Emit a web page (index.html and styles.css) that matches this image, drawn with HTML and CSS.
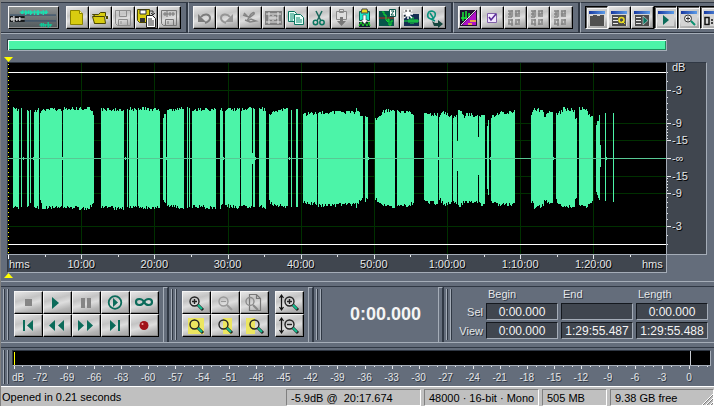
FILE: index.html
```
<!DOCTYPE html>
<html lang="en">

<head>
    <meta charset="UTF-8">
    <meta name="viewport" content="width=device-width, initial-scale=1.0">
    <title>Wave Editor</title>
    <link rel="stylesheet" href="styles.css">
</head>

<body>
    <!-- Shared shapes -->
    <svg class="defs" aria-hidden="true">
        <linearGradient id="titleBar">
            <stop offset="0" stop-color="#1838a0" />
            <stop offset="1" stop-color="#5c9ce8" />
        </linearGradient>
        <symbol id="lens" viewBox="0 0 28 22">
            <circle cx="12.5" cy="9.5" r="4.5" fill="none" stroke="currentColor" stroke-width="1.4" />
            <path d="M16 13l5 5" stroke="#222" stroke-width="3" />
            <path d="M16 13l4 4" stroke="#10c090" stroke-width="2" />
        </symbol>
        <symbol id="faders" viewBox="0 0 22 22">
            <path d="M4 4h5M4 7h3M8 3v7M4 10h4M11 4h5M15 3v4M11 7h5M11 9h5M4 13h5M4 17h5M8 12v7M11 13h5M15 12v4M11 17h5M5 14v3M6 4v5M12 4v5M12 14v4" fill="none" stroke="#858585" stroke-width="1.5" />
        </symbol>
        <symbol id="window" viewBox="0 0 22 22">
            <path d="M3 4h16v15H3z" fill="#d4d4d4" />
            <path d="M3 4h16v3H3z" fill="url(#titleBar)" />
        </symbol>
    </svg>

    <div class="app">
        <header class="toolbar">
            <div class="tool-group">
                <button class="logo-btn" aria-label="Switch view">
                    <svg viewBox="0 0 50 20">
                        <path d="M1 7h47M1 13h47" stroke="#2b4a68" />
                        <path d="M11 4h29M13 3v3M14 2v4M17 2v5M18 3v3M20 2v4M22 2v5M23 3v3M26 2v5M29 2v5M30 2v5M33 3v3M35 2v5M37 3v3M38 2v4" stroke="#19e0b0" stroke-width="1.5" />
                        <path d="M1 8h15v6H1z" fill="#16181a" />
                        <path d="M1 11h15M3 9v4M5 8v6M8 10v3M11 9v4" stroke="#eee" stroke-width="1.2" />
                        <path d="M31 17h13M33 15v4M35 15v4M37 16v3M40 14v6M42 16v3" stroke="#10c898" stroke-width="1.5" />
                    </svg>
                </button>
                <button class="tool-btn" aria-label="New">
                    <svg viewBox="0 0 22 22"><path d="M4.500 3.500h9l3 3v11h-12z" fill="#d8cc10" stroke="#8a8200" /><path d="M13.500 3.500v3h3" fill="#fff890" stroke="#8a8200" /></svg>
                </button>
                <button class="tool-btn" aria-label="Open">
                    <svg viewBox="0 0 22 22"><path d="M5.500 16.500v-8l-2-1h6l2-2h5v4" fill="#d8cc10" stroke="#4b4600" /><path d="M5.500 16.500l-2-7h12l1 7z" fill="#d8cc10" stroke="#4b4600" /><path d="M17 9h2v3h-2z" fill="#4b4600" /></svg>
                </button>
                <button class="tool-btn" aria-label="Save" disabled>
                    <svg viewBox="0 0 22 22"><path d="M3.500 3.500h15v15h-13l-2-2zM7.500 3.500v6h7v-6M6.500 18.500v-6h9v6M9 14v3" fill="none" stroke="#8d8d8d" /></svg>
                </button>
                <button class="tool-btn" aria-label="Save as">
                    <svg viewBox="0 0 22 22"><path d="M2.500 2.500h12v13h-10l-2-2z" fill="#d8cc10" stroke="#4b4600" /><path d="M5 3h6v4H5z" fill="#fff" stroke="#333" /><path d="M5 11h5v4H5z" fill="#333" /><path d="M11.500 8.500h6l3 3v9h-9z" fill="#fff" stroke="#222" /><path d="M13 12h4M13 14h6M13 16h6M13 18h6M15 4h3v3M16 6l2 2 2-2" fill="none" stroke="#333" /></svg>
                </button>
                <button class="tool-btn" aria-label="Save selection" disabled>
                    <svg viewBox="0 0 22 22"><path d="M3.500 3.500h15v15h-13l-2-2zM7.500 18.500v-6h8v6M10 14v3M5 7h12M7 5v4M9 4v6M12 5v4M15 5v4" fill="none" stroke="#777" /></svg>
                </button>
            </div>

            <div class="tool-group">
                <button class="tool-btn" aria-label="Undo" disabled>
                    <svg viewBox="0 0 22 22"><path d="M8 10c3-4 9-3 9 1 0 3-2 4-5 5" fill="none" stroke="#7c7c7c" stroke-width="2" /><path d="M5 7v8h8z" fill="#7c7c7c" /></svg>
                </button>
                <button class="tool-btn" aria-label="Redo" disabled>
                    <svg viewBox="0 0 22 22"><path d="M14 10c-3-4-9-3-9 1 0 3 2 4 5 5" fill="none" stroke="#959595" stroke-width="2" /><path d="M17 7v8H9z" fill="#959595" /></svg>
                </button>
                <button class="tool-btn" aria-label="Repeat last command" disabled>
                    <svg viewBox="0 0 22 22"><path d="M4 8l6 2c2-4 6-6 5-3l-5 4c-3 3-1 3 2 1l5 2-6 1-5-2M5 6l4 4" fill="none" stroke="#848484" stroke-width="1.500" /></svg>
                </button>
                <button class="tool-btn" aria-label="Trim" disabled>
                    <svg viewBox="0 0 22 22"><path d="M3 4h17v14H3z" fill="#808080" /><path d="M4 7h15M4 15h15M7 5v12M16 5v12M9 9v4M11 8v6M13 9v4M7 11h9" stroke="#e4e4e4" /></svg>
                </button>
                <button class="tool-btn" aria-label="Copy">
                    <svg viewBox="0 0 22 22"><path d="M3.500 4.500h6l2 2v8h-8z" fill="#e8fff8" stroke="#08755f" /><path d="M9.500 7.500h6l3 3v7h-9z" fill="#e8fff8" stroke="#08755f" /><path d="M5 7h4M5 9h4M5 11h4M5 13h3M11 11h4M11 13h6M11 15h6" stroke="#0d8c70" /></svg>
                </button>
                <button class="tool-btn" aria-label="Cut">
                    <svg viewBox="0 0 22 22"><path d="M8 4l5 10M14 4l-5 10" fill="none" stroke="#17665a" stroke-width="1.500" /><circle cx="7.500" cy="15.500" r="2.200" fill="none" stroke="#08755f" stroke-width="1.500" /><circle cx="14" cy="15.500" r="2.200" fill="none" stroke="#08755f" stroke-width="1.500" /></svg>
                </button>
                <button class="tool-btn" aria-label="Paste" disabled>
                    <svg viewBox="0 0 22 22"><path d="M5.500 4.500h10v8h-10zM8.500 2.500h4v3h-4z" fill="#ddd" stroke="#888" /><path d="M9 10h3v4h3l-4.500 5L6 14h3z" fill="#777" /></svg>
                </button>
                <button class="tool-btn" aria-label="Paste to new">
                    <svg viewBox="0 0 22 22"><path d="M5.500 4.500h10v9h-10z" fill="#20e8c8" stroke="#08604f" /><path d="M8 2h5l1 4H7z" fill="#e8dc20" stroke="#444" /><path d="M5 15h11v5H5z" fill="#123" /><path d="M5 19l2-4 2 4 2-4 2 4 2-4 1 4" fill="none" stroke="#1bdc20" /><path d="M9 8h3v5h2l-3.500 4L7 13h2z" fill="#fff" stroke="#222" stroke-width=".5" /></svg>
                </button>
                <button class="tool-btn" aria-label="Mix paste">
                    <svg viewBox="0 0 22 22"><path d="M2 4h15v15H2z" fill="#07564a" /><path d="M2 11h15" stroke="#c02020" /><path d="M5 5h2v3h2v5l2 2v-3h1v6h2v-4h2" fill="none" stroke="#16e02c" /><path d="M12.500 2.500h6v7h-6z" fill="#fff" stroke="#07564a" /><path d="M14 4h3l-3 4h3" fill="none" stroke="#07564a" /></svg>
                </button>
                <button class="tool-btn" aria-label="Delete silence">
                    <svg viewBox="0 0 22 22"><path d="M4 7h15v12H4z" fill="#152f52" /><path d="M4 14h15M9 12v4M11 11v6M13 10v7M15 12v4M17 12v4" stroke="#19e840" /><path d="M8 2v10M3 7h10M4 3l8 8M12 3l-8 8" stroke="#fff" stroke-width="1.500" /><path d="M6 3v2M10 3v2M4 9h2" stroke="#222" /></svg>
                </button>
                <button class="tool-btn" aria-label="Convert sample type">
                    <svg viewBox="0 0 22 22"><path d="M8 12C3 11 4 4 9 4c5 1 4 7-1 8l4 2M7 6l4 6" fill="none" stroke="#0a927c" stroke-width="1.600" /><path d="M9 14l3 2h3v-3l5 4-5 4v-2h-4z" fill="#14463e" /></svg>
                </button>
            </div>

            <div class="tool-group">
                <button class="tool-btn" aria-label="Spectral view">
                    <svg viewBox="0 0 22 22"><path d="M2 3h17v16H2z" fill="#201030" /><path d="M4 18L18 4v14z" fill="#b010c8" /><path d="M3 11h6M5 5v9M8 4v8M11 6v5" stroke="#18e838" stroke-width="1.500" /><path d="M3 18L18 3" stroke="#ddd" /><path d="M12 14h6M10 17h4" stroke="#f4d820" stroke-width="1.500" /></svg>
                </button>
                <button class="tool-btn" aria-label="Settings">
                    <svg viewBox="0 0 22 22"><path d="M6.500 6.500h9v9h-9z" fill="#f4e8ff" stroke="#8060a8" /><path d="M8 10l2 3 5-6" fill="none" stroke="#5a2c98" stroke-width="1.600" /></svg>
                </button>
                <button class="tool-btn" aria-label="Script 1" disabled><svg><use href="#faders" /></svg></button>
                <button class="tool-btn" aria-label="Script 2" disabled><svg><use href="#faders" /></svg></button>
                <button class="tool-btn" aria-label="Script 3" disabled><svg><use href="#faders" /></svg></button>
            </div>

            <div class="tool-group">
                <button class="tool-btn pressed" aria-label="Organizer" aria-pressed="true">
                    <svg viewBox="0 0 22 22"><use href="#window" /><path d="M4 9h3v-1h4v1h3v-1h4v11H4z" fill="#505050" /></svg>
                </button>
                <button class="tool-btn" aria-label="Cue list">
                    <svg viewBox="0 0 22 22"><use href="#window" /><path d="M4 8h14v11H4z" fill="#4c4c4c" /><path d="M5 10.500h5M5 13.500h5M5 16.500h5" stroke="#e8e8e8" /><circle cx="13.500" cy="13" r="2.500" fill="none" stroke="#e8dc20" stroke-width="1.600" /><path d="M14 14l3 3" stroke="#e8dc20" /></svg>
                </button>
                <button class="tool-btn" aria-label="Play list">
                    <svg viewBox="0 0 22 22"><use href="#window" /><path d="M4 8h14v11H4z" fill="#4c4c4c" /><path d="M5 10.500h5M5 13.500h5M5 16.500h5" stroke="#e8e8e8" /><path d="M12 9l5 4.500-5 4.500z" fill="#0b7460" stroke="#ddd" stroke-width=".6" /></svg>
                </button>
                <button class="tool-btn pressed" aria-label="Transport" aria-pressed="true">
                    <svg viewBox="0 0 22 22"><use href="#window" /><path d="M8 8l6 5-6 5z" fill="#0b6b5a" /></svg>
                </button>
                <button class="tool-btn pressed" aria-label="Zoom controls" aria-pressed="true">
                    <svg viewBox="0 0 22 22"><use href="#window" /><circle cx="10" cy="11.500" r="3.500" fill="#eee" stroke="#333" /><path d="M8 11.500h4M10 9.500v4" stroke="#333" /><path d="M13 14l4 4" stroke="#089070" stroke-width="2" /></svg>
                </button>
                <button class="tool-btn pressed" aria-label="Time display" aria-pressed="true">
                    <svg viewBox="0 0 22 22"><use href="#window" /><path d="M4 10.500h4v7H4zM11 12v2M11 15v2M14 11l2-1v8" fill="none" stroke="#111" stroke-width="1.500" /></svg>
                </button>
            </div>
        </header>

        <main class="editor">
            <div class="overview"></div>
            <div class="marker-row"><span class="marker down"></span></div>
            <div class="wave-row">
                <svg class="wave" id="wave" viewBox="0 0 658 191" preserveAspectRatio="none" role="img" aria-label="Waveform"></svg>
                <svg class="db-scale" id="dbScale"></svg>
            </div>
            <svg class="time-ruler" id="timeRuler"></svg>
            <div class="marker-row bottom"><span class="marker up"></span></div>
        </main>

        <div class="rail"></div>

        <section class="controls">
            <div class="panel">
                <span class="grip"></span>
                <div class="btn-grid transport">
                    <button class="big-btn" aria-label="Stop" disabled><svg viewBox="0 0 28 22"><path d="M11 7h7v7h-7z" fill="#858585" /></svg></button>
                    <button class="big-btn" aria-label="Play"><svg viewBox="0 0 28 22"><path d="M9 5l7 6-7 6z" fill="#0b6b5a" /></svg></button>
                    <button class="big-btn" aria-label="Pause" disabled><svg viewBox="0 0 28 22"><path d="M9 6h4v10H9zM15 6h4v10h-4z" fill="#858585" /></svg></button>
                    <button class="big-btn" aria-label="Play to end"><svg viewBox="0 0 28 22"><circle cx="14" cy="10.500" r="6.300" fill="none" stroke="#0b6b5a" stroke-width="1.800" /><path d="M12 6l5 4.500-5 4.500z" fill="#0b6b5a" /></svg></button>
                    <button class="big-btn" aria-label="Loop"><svg viewBox="0 0 28 22"><path d="M14 10c-2-4-8-4-8 0s6 4 8 0 8-4 8 0-6 4-8 0z" fill="none" stroke="#0b6b5a" stroke-width="2.200" /></svg></button>
                    <button class="big-btn" aria-label="Go to beginning"><svg viewBox="0 0 28 22"><path d="M9 5h2v11H9zM19 5v11l-6-5.500z" fill="#0b6b5a" /></svg></button>
                    <button class="big-btn" aria-label="Rewind"><svg viewBox="0 0 28 22"><path d="M12 5v11l-6-5.500zM21 5v11l-6-5.500z" fill="#0b6b5a" /></svg></button>
                    <button class="big-btn" aria-label="Fast forward"><svg viewBox="0 0 28 22"><path d="M6 5v11l6-5.500zM15 5v11l6-5.500z" fill="#0b6b5a" /></svg></button>
                    <button class="big-btn" aria-label="Go to end"><svg viewBox="0 0 28 22"><path d="M17 5h2v11h-2zM9 5v11l6-5.500z" fill="#0b6b5a" /></svg></button>
                    <button class="big-btn" aria-label="Record"><svg viewBox="0 0 28 22"><circle cx="14" cy="10.500" r="4.500" fill="#a01218" /><circle cx="12.500" cy="9" r="1" fill="#f0a0a0" /></svg></button>
                </div>
                <span class="edge"></span>
            </div>

            <div class="panel">
                <span class="grip"></span>
                <div class="btn-grid zoom">
                    <button class="big-btn" aria-label="Zoom in"><svg viewBox="0 0 28 22"><use href="#lens" /><path d="M10 9.500h5M12.500 7v5" stroke="#222" stroke-width="1.400" /></svg></button>
                    <button class="big-btn" aria-label="Zoom out" disabled><svg viewBox="0 0 28 22"><circle cx="12.500" cy="9.500" r="4.500" fill="none" stroke="#999" stroke-width="1.400" /><path d="M16 13l5 5" stroke="#999" stroke-width="2" /><path d="M10 9.500h5" stroke="#999" /></svg></button>
                    <button class="big-btn" aria-label="Zoom full" disabled><svg viewBox="0 0 28 22"><path d="M9.500 2.500h7l4 4v12h-11zM16.500 2.500v4h4" fill="none" stroke="#777" stroke-width="1.200" /><circle cx="10" cy="9.500" r="4" fill="none" stroke="#8c8c8c" stroke-width="1.400" /><path d="M13 13l5 5" stroke="#888" stroke-width="2" /></svg></button>
                    <button class="big-btn" aria-label="Zoom to selection"><svg viewBox="0 0 28 22"><path d="M6 3h16v16H6z" fill="#ece660" /><use href="#lens" /></svg></button>
                    <button class="big-btn" aria-label="Zoom to left edge"><svg viewBox="0 0 28 22"><path d="M12 3h9v16h-9z" fill="#ece660" /><use href="#lens" /></svg></button>
                    <button class="big-btn" aria-label="Zoom to right edge"><svg viewBox="0 0 28 22"><path d="M6 3h9v16H6z" fill="#ece660" /><use href="#lens" x="2" /></svg></button>
                </div>
                <div class="btn-grid zoom-vertical">
                    <button class="big-btn" aria-label="Zoom in vertically"><svg viewBox="0 0 28 22"><path d="M6.500 4v13M4.500 6l2-3 2 3M4.500 15l2 3 2-3" fill="none" stroke="#111" stroke-width="1.200" /><use href="#lens" x="2" /><path d="M12 9.500h5M14.500 7v5" stroke="#222" stroke-width="1.400" /></svg></button>
                    <button class="big-btn" aria-label="Zoom out vertically"><svg viewBox="0 0 28 22"><path d="M6.500 4v13M4.500 6l2-3 2 3M4.500 15l2 3 2-3" fill="none" stroke="#111" stroke-width="1.200" /><use href="#lens" x="2" /><path d="M12 9.500h5" stroke="#222" stroke-width="1.400" /></svg></button>
                </div>
                <span class="edge"></span>
            </div>

            <div class="panel time-panel">
                <span class="grip"></span>
                <output class="time">0:00.000</output>
                <span class="edge"></span>
            </div>

            <div class="panel range-panel">
                <span class="grip"></span>
                <div class="range-grid">
                    <span></span>
                    <span class="col-name">Begin</span>
                    <span class="col-name">End</span>
                    <span class="col-name">Length</span>
                    <label for="selBegin">Sel</label>
                    <input type="text" id="selBegin" value="0:00.000">
                    <input type="text" aria-label="Sel end" value="">
                    <input type="text" aria-label="Sel length" value="0:00.000">
                    <label for="viewBegin">View</label>
                    <input type="text" id="viewBegin" value="0:00.000">
                    <input type="text" aria-label="View end" value="1:29:55.487">
                    <input type="text" aria-label="View length" value="1:29:55.488">
                </div>
            </div>
        </section>

        <div class="rail"></div>

        <section class="meter">
            <span class="grip"></span>
            <div class="meter-body">
                <svg class="meter-bar" aria-label="Level meter">
                    <path d="M1 1h1v13H1z" fill="#ffff00" />
                    <rect x="97.200%" y="0" width="1" height="14" fill="#c8ccd2" />
                </svg>
                <svg class="meter-scale" id="meterScale"></svg>
            </div>
        </section>

        <footer class="status">
            <span class="status-msg">Opened in 0.21 seconds</span>
            <span class="cell level">-5.9dB @&nbsp; 20:17.674</span>
            <span class="cell format">48000 · 16-bit · Mono</span>
            <span class="cell size">505 MB</span>
            <span class="cell free">9.38 GB free
                <svg class="sizer" viewBox="0 0 12 12"><path d="M1 12L12 1M5 12l7-7M9 12l3-3" stroke="#fff" /><path d="M2 12L12 2M6 12l6-6M10 12l2-2" stroke="#808080" /></svg>
            </span>
        </footer>
    </div>

    <script src="script.js"></script>
</body>

</html>
```
FILE: styles.css
```
/* Global Style */
* {
    margin: 0;
    padding: 0;
    box-sizing: border-box;
}

:root {
    --slate: #646d7b;
    --light: #a5adb8;
    --dark: #303844;
    --ruler: #40464f;
    --wave: #4cf4a8;
}

body {
    font-family: "Liberation Sans", Arial, sans-serif;
    font-size: 11px;
    background: var(--slate);
    color: #e4e6e8;
}

svg {
    display: block;
}

.defs {
    width: 0;
    height: 0;
}

.app {
    display: flex;
    flex-direction: column;
    height: 100vh;
    min-height: 360px;
    overflow: hidden;
    border-left: 1px solid #808080;
}

/* Toolbar */
.toolbar {
    display: flex;
    flex: none;
    border-top: 2px solid #7c8084;
    border-bottom: 1px solid var(--light);
    overflow: hidden;
}

.tool-group {
    display: flex;
    flex: none;
    padding: 3px 5px;
    border: 1px solid var(--dark);
    border-right-width: 2px;
}

.tool-group + .tool-group {
    border-left-color: var(--light);
    padding-left: 4px;
}

.tool-group:first-child {
    border-left: none;
    padding-left: 7px;
}

.tool-group:last-child {
    flex: 1 0 auto;
}

.tool-btn,
.big-btn,
.logo-btn {
    flex: none;
    border: 1px solid #f4f4f4;
    border-right-color: #000;
    border-bottom-color: #000;
    background: linear-gradient(165deg, #e6e6e6, #c4c4c4 35%, #dedede 55%, #b4b4b4 80%, #a2a2a2);
    box-shadow: inset -1px -1px #8c8c8c;
}

.tool-btn {
    width: 23px;
    height: 23px;
}

.tool-btn svg {
    width: 22px;
    height: 22px;
    margin: -1px;
}

.tool-btn.pressed {
    border-color: #000 #f4f4f4 #f4f4f4 #000;
    box-shadow: inset 1px 1px #606060, inset 2px 2px #f4f4f4;
}

.tool-btn.pressed svg {
    margin: 0;
}

.logo-btn {
    width: 51px;
    height: 23px;
    margin-right: 7px;
    background: linear-gradient(#8d9090, #50585c);
}

.logo-btn svg {
    width: 49px;
    height: 20px;
}

/* Waveform area */
.editor {
    display: flex;
    flex-direction: column;
    flex: 1;
    min-height: 0;
    padding: 5px 7px 0 6px;
}

.overview {
    flex: none;
    height: 12px;
    margin-right: 40px;
    border: 1px solid var(--dark);
    border-right-color: var(--light);
    border-bottom-color: var(--light);
    background: var(--wave);
    box-shadow: inset 1px 1px #e8fff4, inset -1px -1px #209060;
}

.marker-row {
    display: flex;
    flex: none;
    align-items: flex-end;
    height: 11px;
}

.marker-row.bottom {
    align-items: flex-start;
    height: 8px;
}

.marker {
    width: 9px;
    height: 5px;
    margin-left: -3px;
    background: #ffff00;
}

.marker.down {
    clip-path: polygon(0 0, 100% 0, 50% 100%);
}

.marker.up {
    clip-path: polygon(50% 0, 100% 100%, 0 100%);
}

.wave-row {
    display: flex;
    flex: 1;
    min-height: 0;
}

.wave {
    flex: 1;
    min-width: 0;
    height: 100%;
    background: #000;
    border: 1px solid var(--dark);
    border-right-color: var(--light);
    border-bottom-color: var(--light);
    shape-rendering: crispEdges;
}

.db-scale {
    flex: none;
    width: 40px;
    height: 100%;
    background: var(--ruler);
    border: 1px solid var(--light);
    border-top-color: var(--dark);
    border-left: none;
}

.time-ruler {
    flex: none;
    width: calc(100% - 40px);
    height: 18px;
    background: var(--ruler);
    border: 1px solid var(--light);
    border-top: none;
    border-left-color: var(--dark);
}

.scale-text {
    fill: #e4e6e8;
    font-size: 11px;
    text-shadow: 1px 1px #000;
}

.scale-text.small {
    font-size: 10px;
}

.tick {
    fill: #e4e6e8;
    shape-rendering: crispEdges;
}

/* Bars between the docked rows */
.rail {
    flex: none;
    height: 6px;
    border-top: 1px solid var(--light);
    border-bottom: 1px solid var(--dark);
}

/* Transport, zoom, time and range panels */
.controls {
    display: flex;
    flex: none;
    overflow: hidden;
}

.panel {
    display: flex;
    flex: none;
    padding-left: 2px;
    border-right: 1px solid var(--dark);
}

.grip {
    flex: none;
    width: 5px;
    margin: 2px 0;
    border-left: 1px solid var(--light);
    border-right: 1px solid var(--light);
    box-shadow: inset 1px 0 var(--dark), 1px 0 var(--dark);
}

.edge {
    width: 5px;
    border: 1px solid var(--light);
    border-right-color: var(--dark);
    border-bottom: none;
    margin-left: 4px;
}

.btn-grid {
    display: grid;
    grid-auto-rows: 23px;
    padding: 4px 0 5px;
    margin-left: 6px;
}

.transport {
    grid-template-columns: repeat(5, 29px);
}

.zoom {
    grid-template-columns: repeat(3, 29px);
}

.zoom-vertical {
    grid-template-columns: 29px;
}

.big-btn svg {
    width: 28px;
    height: 22px;
    margin: -1px;
    color: #222;
}

.time-panel {
    flex: 1 0 130px;
}

.time {
    flex: 1;
    align-self: center;
    padding-left: 16px;
    text-align: center;
    font-size: 18px;
    font-weight: bold;
    color: #f4f4f4;
}

.range-panel {
    border-right: none;
    padding-right: 6px;
}

.range-grid {
    display: grid;
    grid-template-columns: 31px repeat(3, 72px);
    grid-template-rows: 14px 17px 17px;
    gap: 2px 3px;
    align-items: center;
    margin-left: 1px;
    text-shadow: 1px 1px #303844;
}

.col-name {
    padding-left: 2px;
}

.range-grid label {
    text-align: right;
}

.range-grid input {
    width: 100%;
    height: 17px;
    border: 1px solid var(--light);
    border-top-color: #14181e;
    border-left-color: #14181e;
    background: var(--ruler);
    color: #f4f4f4;
    font: inherit;
    font-size: 12px;
    text-align: center;
}

/* Level meter */
.meter {
    display: flex;
    flex: none;
    padding: 0 3px 0 2px;
}

.meter-body {
    flex: 1;
    min-width: 0;
    padding-top: 2px;
    margin-left: 4px;
}

.meter-bar {
    width: 100%;
    height: 16px;
    background: #000;
    border: 1px solid var(--dark);
    border-bottom-color: var(--light);
    border-right-color: var(--light);
    shape-rendering: crispEdges;
}

.meter-scale {
    width: 100%;
    height: 20px;
}

.meter-scale .scale-text {
    text-shadow: 1px 1px #303844;
}

/* Status bar */
.status {
    display: flex;
    flex: none;
    gap: 3px;
    height: 20px;
    padding-top: 2px;
    border-top: 1px solid #fff;
    background: #c0c0c0;
    color: #000;
    line-height: 16px;
}

.status-msg {
    flex: 1;
    padding-left: 1px;
}

.cell {
    padding-left: 4px;
    border: 1px solid #808080;
    border-right-color: #fff;
    border-bottom-color: #fff;
    white-space: nowrap;
}

.level {
    width: 135px;
}

.format {
    width: 115px;
}

.size {
    width: 65px;
}

.free {
    display: flex;
    justify-content: space-between;
    width: 104px;
}

.sizer {
    align-self: flex-end;
    width: 12px;
    height: 12px;
}
```
FILE: script.js
```
const WAVE_SECONDS = 5395.488;

// start, end, top at start, top at end, bottom at start, bottom at end
const segments = [
    [5, 11, 45, 46, 144, 144], [13, 14, 45, 45, 144, 144], [19, 21, 47, 48, 144, 141],
    [22, 23, 47, 47, 140, 140], [26, 31, 48, 45, 143, 144], [32, 34, 50, 46, 137, 143],
    [34, 54, 46, 46, 144, 143], [55, 82, 45, 45, 144, 145], [82, 86, 46, 51, 143, 137],
    [93, 116, 46, 46, 144, 145], [119, 120, 46, 46, 144, 144], [121, 129, 45, 46, 144, 143],
    [130, 152, 45, 46, 144, 144], [155, 158, 55, 46, 138, 143], [159, 176, 46, 45, 142, 145],
    [179, 180, 44, 44, 145, 145], [181, 182, 45, 45, 144, 144], [184, 208, 46, 46, 143, 144],
    [212, 215, 45, 48, 144, 141], [217, 232, 46, 46, 142, 144], [233, 244, 46, 45, 143, 144],
    [244, 245, 90, 90, 101, 101], [245, 247, 45, 46, 144, 144], [251, 258, 45, 46, 143, 144],
    [261, 265, 51, 48, 138, 142], [265, 280, 47, 46, 141, 143], [283, 284, 47, 47, 144, 144],
    [288, 290, 46, 46, 144, 144], [295, 309, 51, 49, 138, 141], [310, 350, 49, 49, 142, 141],
    [348, 352, 46, 49, 143, 136], [350, 355, 50, 53, 137, 135], [357, 360, 54, 56, 137, 134],
    [367, 374, 56, 49, 135, 142], [374, 387, 48, 46, 142, 144], [389, 399, 48, 48, 143, 142],
    [399, 406, 47, 51, 142, 139], [416, 430, 51, 51, 138, 140], [431, 436, 52, 46, 135, 142],
    [436, 444, 50, 53, 141, 138], [445, 449, 55, 50, 138, 139], [449, 450, 78, 78, 108, 108],
    [450, 457, 46, 54, 143, 138], [457, 470, 51, 52, 138, 139], [470, 471, 74, 74, 112, 112],
    [471, 477, 52, 49, 140, 142], [479, 481, 63, 51, 126, 138], [483, 488, 53, 51, 137, 141],
    [488, 507, 50, 48, 141, 141], [523, 526, 51, 46, 138, 142], [526, 536, 46, 47, 144, 142],
    [536, 545, 53, 46, 136, 142], [548, 555, 51, 47, 137, 143], [555, 567, 45, 47, 144, 142],
    [567, 569, 56, 53, 136, 134], [571, 580, 45, 46, 141, 144], [580, 585, 50, 54, 142, 135],
    [588, 592, 60, 51, 129, 139], [592, 593, 82, 82, 104, 104], [597, 598, 50, 50, 138, 138],
    [605, 606, 50, 50, 139, 139]
];

// quiet bits between the loud parts
const blips = [15, 25, 54, 117, 158, 215, 247, 281, 360, 430, 482, 545, 598];

// level grid: y position and label
const levels = [[27, '-3'], [60, '-9'], [77, '-15'], [95, '-∞'], [113, '-15'], [130, '-9'], [163, '-3']];

function rect(x, y, w, h, fill) {
    return `<rect x="${x}" y="${y}" width="${w}" height="${h}" fill="${fill}" />`;
}

function drawWave() {
    let out = '';
    for (let t = 600; t < WAVE_SECONDS; t += 600) {
        out += rect(Math.round(t / WAVE_SECONDS * 658), 0, 1, 191, '#003000');
    }
    levels.forEach(([y]) => out += rect(0, y, 658, 1, '#003000'));
    out += rect(0, 9, 658, 1, '#fff') + rect(0, 181, 658, 1, '#fff');

    let path = '';
    let seed = 7;
    const jitter = () => {
        seed = (seed * 1103515245 + 12345) % 2147483648;
        return Math.floor(seed / 65536) % 4 - 1;
    };
    segments.forEach(([x0, x1, t0, t1, b0, b1]) => {
        for (let x = x0; x < x1; x++) {
            const k = (x - x0) / (x1 - x0);
            const wide = x1 - x0 > 2;
            const top = Math.round(t0 + (t1 - t0) * k) + (wide ? jitter() : 0);
            const bottom = Math.round(b0 + (b1 - b0) * k) + (wide ? jitter() : 0);
            path += `M${x} ${top}h1V${bottom}h-1z`;
        }
    });
    blips.forEach(x => path += `M${x} 94h1v3h-1z`);
    out += `<path d="${path}" fill="#4cf4a8" />`;
    out += rect(0, 95, 658, 1, '#58c894');

    for (let y = 1; y < 191; y += 4) {
        out += rect(0, y, 1, 1, '#ffff00');
    }
    document.getElementById('wave').innerHTML = out;
}

function drawTimeRuler() {
    let out = rect(0, 0, 1, 4, '#fff');
    for (let t = 300; t < WAVE_SECONDS; t += 300) {
        const x = (t / WAVE_SECONDS * 100).toFixed(2) + '%';
        out += `<rect class="tick" x="${x}" y="0" width="1" height="${t % 600 ? 2 : 4}" />`;
        if (t % 600 === 0) {
            const min = t / 60;
            const label = min < 60 ? `${min}:00` : `1:${String(min - 60).padStart(2, '0')}:00`;
            out += `<text class="scale-text" x="${x}" y="13" text-anchor="middle">${label}</text>`;
        }
    }
    out += '<text class="scale-text" x="1" y="13">hms</text>';
    out += '<text class="scale-text" x="99.500%" y="13" text-anchor="end">hms</text>';
    document.getElementById('timeRuler').innerHTML = out;
}

function drawDbScale() {
    let out = '<text class="scale-text" x="5" y="8">dB</text>';
    levels.forEach(([y, label]) => {
        const pos = (y / 191 * 100).toFixed(2) + '%';
        out += `<rect class="tick" x="0" y="${pos}" width="4" height="1" />`;
        out += `<text class="scale-text" x="5" y="${pos}" dy="4">${label}</text>`;
    });
    [9, 18, 34, 40, 46, 51, 56, 63, 66, 69, 72, 75].forEach(y => {
        [y, 190 - y].forEach(p => {
            out += `<rect class="tick" x="0" y="${(p / 191 * 100).toFixed(2)}%" width="1" height="1" />`;
        });
    });
    document.getElementById('dbScale').innerHTML = out;
}

function drawMeterScale() {
    let out = '<text class="scale-text small" x="0" y="15">dB</text><rect class="tick" x="2" y="0" width="1" height="3" />';
    for (let db = -74; db <= 2; db++) {
        const x = (96.85 + db * 1.2895).toFixed(2) + '%';
        out += `<rect class="tick" x="${x}" y="0" width="1" height="${db % 3 ? 1 : 3}" />`;
        if (db % 3 === 0) {
            out += `<text class="scale-text small" x="${x}" y="15" text-anchor="middle">${db}</text>`;
        }
    }
    document.getElementById('meterScale').innerHTML = out;
}

drawWave();
drawTimeRuler();
drawDbScale();
drawMeterScale();
```
